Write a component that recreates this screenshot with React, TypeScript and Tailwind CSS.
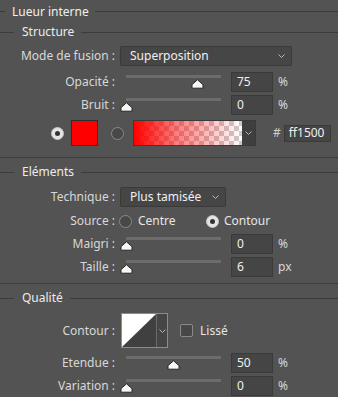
import React from "react";

const Chevron = () => (
  <svg width="7" height="4" viewBox="0 0 7 4">
    <polyline points="0.5,0.5 3.5,3.5 6.5,0.5" fill="none" stroke="#b8b8b8" strokeWidth="1" />
  </svg>
);

function Header({ title, main }: { title: string; main?: boolean }) {
  return (
    <div className="flex items-center h-full">
      <div className={main ? "h-px w-[5px] bg-[#3c3c3c]" : "h-px w-[14px] bg-[#3c3c3c]"} />
      <span className={main ? "pl-[7px] pr-[6px] text-[#f0f0f0]" : "pl-[8px] pr-[7px] text-[#ececec]"}>{title}</span>
      <div className="h-px flex-1 bg-[#3c3c3c]" />
    </div>
  );
}

function Thumb() {
  return (
    <svg width="13" height="10" viewBox="0 0 13 10">
      <path d="M6.5 0.8 L12 5.6 L12 9.2 L1 9.2 L1 5.6 Z" fill="#f7f7f7" stroke="#262626" strokeWidth="1" strokeLinejoin="round" />
    </svg>
  );
}

function Slider({ pct }: { pct: number }) {
  return (
    <div className="relative w-[107px] h-[20px] shrink-0">
      <div className="absolute left-[6px] right-[6px] top-[3px] h-[3px] bg-[#6c6c6c]" />
      <div className="absolute top-[7px]" style={{ left: `${(pct * 95) / 100 - 0.5}px` }}>
        <Thumb />
      </div>
    </div>
  );
}

function Field({ value, w = "w-[42px]" }: { value: string; w?: string }) {
  return (
    <div className={`${w} h-[20px] bg-[#454545] border border-[#3a3a3a] flex items-center pl-[5px] text-[#f0f0f0]`}>
      {value}
    </div>
  );
}

function Label({ text }: { text: string }) {
  return <div className="w-[116px] shrink-0 text-right text-[#d8d8d8] pr-[1px]">{text}</div>;
}

function SliderRow({ label, pct, value, unit, top }: { label: string; pct: number; value: string; unit: string; top: string }) {
  return (
    <div className={`flex items-center h-[20px] ${top}`}>
      <Label text={label} />
      <div className="ml-[4px] flex items-center">
        <Slider pct={pct} />
        <div className="ml-[4px]">
          <Field value={value} />
        </div>
        <span className="ml-[5px] text-[#d8d8d8]">{unit}</span>
      </div>
    </div>
  );
}

function RadioOn() {
  return (
    <div className="w-[13px] h-[13px] rounded-full bg-[#e4e4e4] border border-[#c4c4c4] flex items-center justify-center shrink-0">
      <div className="w-[5px] h-[5px] rounded-full bg-[#333333]" />
    </div>
  );
}

function RadioOff() {
  return <div className="w-[13px] h-[13px] rounded-full bg-[#484848] border border-[#8a8a8a] shrink-0" />;
}

export default function App() {
  return (
    <div className="w-[338px] h-[397px] bg-[#535353] overflow-hidden text-[12px] leading-[16px] font-['Noto_Sans',sans-serif] select-none">
      {/* Main header */}
      <div className="h-[23px]">
        <Header title="Lueur interne" main />
      </div>
      {/* Structure */}
      <div className="h-[18px]">
        <Header title="Structure" />
      </div>

      <div className="flex items-center h-[20px] mt-[5px]">
        <Label text="Mode de fusion :" />
        <div className="ml-[4px] w-[172px] h-[20px] bg-[#464646] border border-[#3a3a3a] rounded-[2px] flex items-center justify-between pl-[9px] pr-[6px] text-[#f0f0f0]">
          <span>Superposition</span>
          <Chevron />
        </div>
      </div>

      <SliderRow label="Opacité :" pct={75} value="75" unit="%" top="mt-[6px]" />
      <SliderRow label="Bruit :" pct={0} value="0" unit="%" top="mt-[3px]" />

      {/* Color row */}
      <div className="flex items-center h-[26px] mt-[5px]">
        <div className="ml-[51px]">
          <RadioOn />
        </div>
        <div className="ml-[7px] w-[27px] h-[26px] bg-[#ff0000] border border-[#2e2e2e]" />
        <div className="ml-[13px]">
          <RadioOff />
        </div>
        <div className="ml-[9px] w-[123px] h-[26px] border border-[#3a3a3a] flex">
          <div className="flex-1 h-full bg-[repeating-conic-gradient(#cccccc_0%_25%,#ffffff_0%_50%)] bg-[length:10px_10px]">
            <div className="w-full h-full bg-[linear-gradient(to_right,#ff0000,rgba(255,0,0,0.5)_40%,rgba(255,0,0,0))]" />
          </div>
          <div className="w-[13px] h-full bg-[#3f3f3f] flex items-center justify-center">
            <Chevron />
          </div>
        </div>
        <span className="ml-[17px] text-[#cfcfcf]">#</span>
        <div className="ml-[3px] w-[47px] h-[17px] bg-[#454545] border border-[#3a3a3a] flex items-center pl-[4px] text-[#f0f0f0]">
          ff1500
        </div>
      </div>

      <div className="mt-[11px] h-px bg-[#3e3e3e]" />

      {/* Eléments */}
      <div className="h-[20px] mt-[4px]">
        <Header title="Eléments" />
      </div>

      <div className="flex items-center h-[20px] mt-[5px]">
        <Label text="Technique :" />
        <div className="ml-[4px] w-[106px] h-[20px] bg-[#464646] border border-[#3a3a3a] rounded-[2px] flex items-center justify-between pl-[9px] pr-[6px] text-[#f0f0f0]">
          <span>Plus tamisée</span>
          <Chevron />
        </div>
      </div>

      <div className="flex items-center h-[20px] mt-[4px]">
        <Label text="Source :" />
        <div className="ml-[3px]">
          <RadioOff />
        </div>
        <span className="ml-[6px] text-[#e6e6e6] w-[68px]">Centre</span>
        <RadioOn />
        <span className="ml-[5px] text-[#e6e6e6]">Contour</span>
      </div>

      <SliderRow label="Maigri :" pct={0} value="0" unit="%" top="mt-[3px]" />
      <SliderRow label="Taille :" pct={0} value="6" unit="px" top="mt-[3px]" />

      <div className="mt-[6px] h-px bg-[#3e3e3e]" />

      {/* Qualité */}
      <div className="h-[20px] mt-[4px]">
        <Header title="Qualité" />
      </div>

      <div className="flex items-center h-[35px] mt-[5px]">
        <Label text="Contour :" />
        <div className="ml-[5px] w-[47px] h-[35px] border border-[#8c8c8c] flex">
          <svg width="34" height="33" viewBox="0 0 34 33" className="shrink-0">
            <rect x="0" y="0" width="34" height="33" fill="#404040" />
            <polygon points="0,0 34,0 0,33" fill="#ffffff" />
          </svg>
          <div className="flex-1 h-full bg-[#454545] border-l border-[#6a6a6a] flex items-center justify-center">
            <Chevron />
          </div>
        </div>
        <div className="ml-[12px] w-[13px] h-[13px] bg-[#474747] border border-[#8a8a8a] rounded-[2px]" />
        <span className="ml-[7px] text-[#e6e6e6]">Lissé</span>
      </div>

      <SliderRow label="Etendue :" pct={50} value="50" unit="%" top="mt-[5px]" />
      <SliderRow label="Variation :" pct={0} value="0" unit="%" top="mt-[3px]" />
    </div>
  );
}
